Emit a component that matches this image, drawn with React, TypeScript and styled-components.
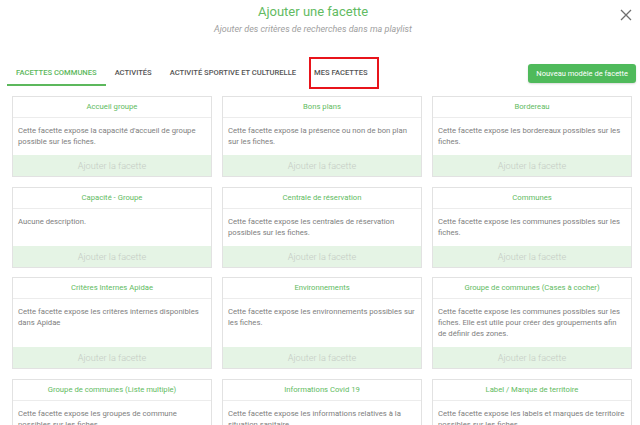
import React, { FC } from 'react'
import styled, { createGlobalStyle, css } from 'styled-components'

const GREEN = '#5cb85c'

const GlobalStyle = createGlobalStyle`
html, body {
  margin: 0;
  padding: 0;
  background: #fff;
  font-family: Roboto, "Liberation Sans", Arial, sans-serif;
  overflow: hidden;
}
`

const Modal = styled.div`
width: 640px;
height: 425px;
overflow: hidden;
display: flex;
flex-direction: column;
background: #fff;
`
const Header = styled.div`
display: grid;
grid-template-columns: 26px 1fr 40px;
padding-top: 4px;
`
const TitleBlock = styled.div`
grid-column: 2;
display: flex;
flex-direction: column;
align-items: center;
gap: 3px;
`
const Title = styled.h1`
margin: 0;
font-size: 13px;
line-height: 16px;
font-weight: 400;
color: #62bb62;
`
const Subtitle = styled.p`
margin: 0;
font-size: 9px;
line-height: 12px;
font-style: italic;
color: #a0a0a0;
`
const CloseButton = styled.button`
grid-column: 3;
justify-self: end;
margin: 3px 6px 0 0;
width: 16px;
height: 16px;
padding: 0;
border: 0;
background: none;
display: flex;
align-items: center;
justify-content: center;
cursor: pointer;
`
const TabBar = styled.div`
display: flex;
align-items: center;
margin-top: 25px;
padding: 0 4px 0 7px;
`
const Tabs = styled.div`
display: flex;
flex: 1;
`
const Tab = styled.div<{ $active?: boolean; $marked?: boolean }>`
position: relative;
height: 26px;
padding: 0 9px;
display: flex;
align-items: center;
font-size: 7.6px;
font-weight: 500;
text-transform: uppercase;
color: ${p => (p.$active ? GREEN : '#555')};
box-sizing: border-box;
border-bottom: 2px solid ${p => (p.$active ? GREEN : 'transparent')};
${p => p.$marked && css`
  &::after {
    content: '';
    position: absolute;
    left: 3.5px;
    right: -2.5px;
    top: -3px;
    bottom: -5px;
    border: 2px solid #e8141b;
  }
`}
`
const NewButton = styled.button`
height: 19px;
padding: 0 8px;
border: 0;
border-radius: 3px;
background: #4fba5b;
color: #fff;
font-family: inherit;
font-size: 7.5px;
box-shadow: 0 1px 2px rgba(0, 0, 0, 0.15);
`
const Grid = styled.div`
display: grid;
grid-template-columns: repeat(3, 200px);
column-gap: 10px;
row-gap: 9.5px;
margin-top: 10px;
padding: 0 8px 0 12px;
align-items: stretch;
`
const Card = styled.div`
display: flex;
flex-direction: column;
border: 1px solid #e2e2e2;
background: #fff;
`
const CardTitle = styled.div`
height: 20px;
line-height: 20px;
text-align: center;
font-size: 7.7px;
color: #62bb62;
border-bottom: 1px solid #ececec;
`
const CardBody = styled.div`
flex: 1;
padding: 7px 5px 8px;
font-size: 7.7px;
line-height: 11px;
color: #7e7e7e;
`
const CardFooter = styled.div`
height: 21px;
display: flex;
align-items: center;
justify-content: center;
background: #e5f4e5;
color: #c4cbc4;
font-size: 9.2px;
font-weight: 300;
`

const facettes = [
  { title: 'Accueil groupe', text: "Cette facette expose la capacité d'accueil de groupe possible sur les fiches." },
  { title: 'Bons plans', text: 'Cette facette expose la présence ou non de bon plan sur les fiches.' },
  { title: 'Bordereau', text: 'Cette facette expose les bordereaux possibles sur les fiches.' },
  { title: 'Capacité - Groupe', text: 'Aucune description.' },
  { title: 'Centrale de réservation', text: 'Cette facette expose les centrales de réservation possibles sur les fiches.' },
  { title: 'Communes', text: 'Cette facette expose les communes possibles sur les fiches.' },
  { title: 'Critères Internes Apidae', text: 'Cette facette expose les critères internes disponibles dans Apidae' },
  { title: 'Environnements', text: 'Cette facette expose les environnements possibles sur les fiches.' },
  { title: 'Groupe de communes (Cases à cocher)', text: 'Cette facette expose les communes possibles sur les fiches. Elle est utile pour créer des groupements afin de définir des zones.' },
  { title: 'Groupe de communes (Liste multiple)', text: 'Cette facette expose les groupes de commune possibles sur les fiches.' },
  { title: 'Informations Covid 19', text: 'Cette facette expose les informations relatives à la situation sanitaire.' },
  { title: 'Label / Marque de territoire', text: 'Cette facette expose les labels et marques de territoire possibles sur les fiches.' },
]

const tabs = ['Facettes communes', 'Activités', 'Activité sportive et culturelle', 'Mes facettes']

const FacetteCard: FC<{ title: string; text: string }> = ({ title, text }) => (
  <Card>
    <CardTitle>{title}</CardTitle>
    <CardBody>{text}</CardBody>
    <CardFooter>Ajouter la facette</CardFooter>
  </Card>
)

export default function App() {
  return (
    <Modal>
      <GlobalStyle />
      <Header>
        <TitleBlock>
          <Title>Ajouter une facette</Title>
          <Subtitle>Ajouter des critères de recherches dans ma playlist</Subtitle>
        </TitleBlock>
        <CloseButton aria-label='Fermer'>
          <svg width='12' height='12' viewBox='0 0 12 12'>
            <path d='M1 1 L11 11 M11 1 L1 11' stroke='#6f6f6f' strokeWidth='1.3' fill='none' />
          </svg>
        </CloseButton>
      </Header>
      <TabBar>
        <Tabs>
          {tabs.map((t, i) => (
            <Tab key={t} $active={i === 0} $marked={i === 3}>{t}</Tab>
          ))}
        </Tabs>
        <NewButton>Nouveau modèle de facette</NewButton>
      </TabBar>
      <Grid>
        {facettes.map(f => <FacetteCard key={f.title} title={f.title} text={f.text} />)}
      </Grid>
    </Modal>
  )
}
